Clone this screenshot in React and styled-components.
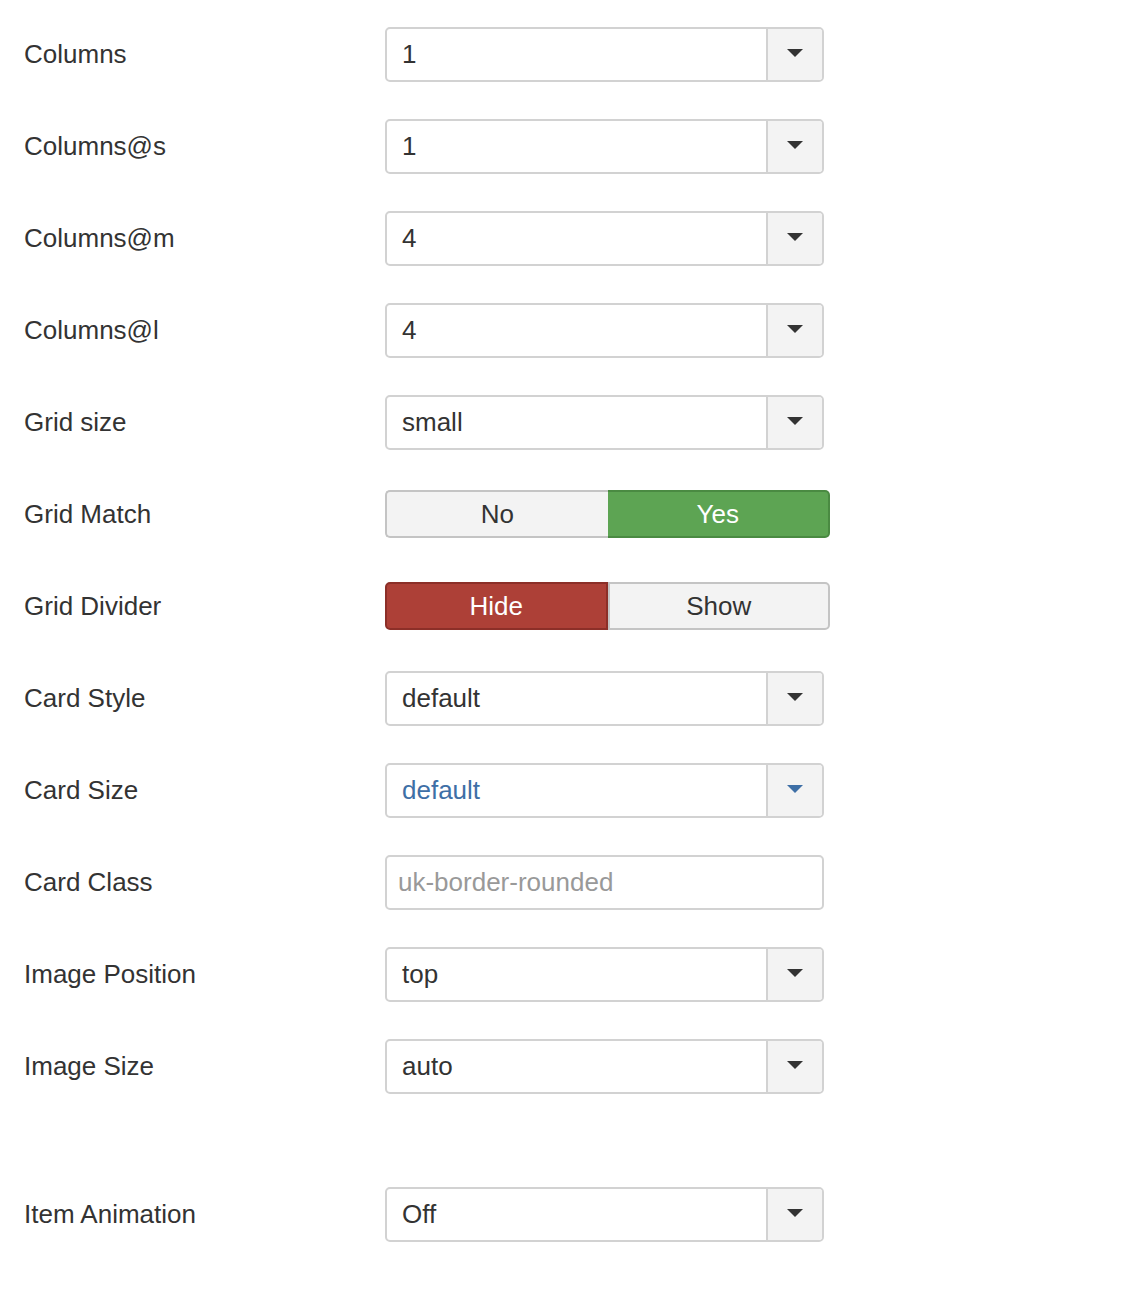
import React from 'react'
import styled, { createGlobalStyle } from 'styled-components'

const GlobalStyle = createGlobalStyle`
  body {
    margin: 0;
    background: #fff;
    font-family: 'Liberation Sans', Arial, sans-serif;
    color: #333;
  }
`

const fields = [
  { label: 'Columns', type: 'select', value: '1' },
  { label: 'Columns@s', type: 'select', value: '1' },
  { label: 'Columns@m', type: 'select', value: '4' },
  { label: 'Columns@l', type: 'select', value: '4' },
  { label: 'Grid size', type: 'select', value: 'small' },
  { label: 'Grid Match', type: 'toggle', options: ['No', 'Yes'], active: 1, tone: 'success' },
  { label: 'Grid Divider', type: 'toggle', options: ['Hide', 'Show'], active: 0, tone: 'danger' },
  { label: 'Card Style', type: 'select', value: 'default' },
  { label: 'Card Size', type: 'select', value: 'default', highlight: true },
  { label: 'Card Class', type: 'text', placeholder: 'uk-border-rounded' },
  { label: 'Image Position', type: 'select', value: 'top' },
  { label: 'Image Size', type: 'select', value: 'auto' },
  { label: 'Item Animation', type: 'select', value: 'Off', spaced: true },
]

const tones = {
  success: { bg: '#5da453', border: '#4a8a42' },
  danger: { bg: '#ad4037', border: '#8c2f28' },
}

function Field({ field }) {
  if (field.type === 'toggle') {
    return (
      <Toggle>
        {field.options.map((opt, i) => (
          <ToggleOption key={opt} $active={i === field.active} $tone={field.tone}>
            {opt}
          </ToggleOption>
        ))}
      </Toggle>
    )
  }

  if (field.type === 'text') {
    return <TextInput placeholder={field.placeholder} readOnly />
  }

  return (
    <Select>
      <SelectValue $highlight={field.highlight}>{field.value}</SelectValue>
      <Caret>
        <CaretArrow $highlight={field.highlight} />
      </Caret>
    </Select>
  )
}

export default function App() {
  return (
    <>
      <GlobalStyle />
      <Form>
        {fields.map((f) => (
          <Row key={f.label} $spaced={f.spaced}>
            <Label>{f.label}</Label>
            <Control>
              <Field field={f} />
            </Control>
          </Row>
        ))}
      </Form>
    </>
  )
}

const Form = styled.div`
  display: flex;
  flex-direction: column;
  padding: 27px 0 0 24px;
`

const Row = styled.div`
  display: flex;
  align-items: flex-start;
  height: 92px;
  margin-top: ${(p) => (p.$spaced ? '56px' : '0')};
`

const Label = styled.div`
  width: 361px;
  height: 55px;
  display: flex;
  align-items: center;
  font-size: 26px;
  color: #333;
`

const Control = styled.div`
  height: 55px;
  display: flex;
  align-items: center;
`

const Select = styled.div`
  box-sizing: border-box;
  width: 439px;
  height: 55px;
  display: flex;
  border: 2px solid #d2d2d2;
  border-radius: 5px;
  background: #fff;
  overflow: hidden;
`

const SelectValue = styled.div`
  flex: 1;
  display: flex;
  align-items: center;
  padding-left: 15px;
  font-size: 26px;
  color: ${(p) => (p.$highlight ? '#3e6fa6' : '#333')};
`

const Caret = styled.div`
  width: 54px;
  border-left: 2px solid #d2d2d2;
  background: #f3f3f3;
  display: flex;
  align-items: center;
  justify-content: center;
`

const CaretArrow = styled.span`
  width: 0;
  height: 0;
  border-left: 8px solid transparent;
  border-right: 8px solid transparent;
  border-top: 8px solid ${(p) => (p.$highlight ? '#3e6fa6' : '#333')};
  margin-bottom: 3px;
`

const TextInput = styled.input`
  box-sizing: border-box;
  width: 439px;
  height: 55px;
  border: 2px solid #d2d2d2;
  border-radius: 5px;
  padding: 0 11px;
  font-family: 'Liberation Sans', Arial, sans-serif;
  font-size: 26px;
  outline: none;

  &::placeholder {
    color: #999;
  }
`

const Toggle = styled.div`
  display: flex;
  width: 445px;
  height: 48px;
  margin-top: -1px;
`

const ToggleOption = styled.div`
  box-sizing: border-box;
  flex: 1;
  display: flex;
  align-items: center;
  justify-content: center;
  font-size: 26px;
  background: ${(p) => (p.$active ? tones[p.$tone].bg : '#f3f3f3')};
  color: ${(p) => (p.$active ? '#fff' : '#333')};
  border: 2px solid ${(p) => (p.$active ? tones[p.$tone].border : '#c4c4c4')};

  &:first-child {
    border-radius: 5px 0 0 5px;
    border-right-width: ${(p) => (p.$active ? '2px' : '0')};
  }

  &:last-child {
    border-radius: 0 5px 5px 0;
    border-left-width: ${(p) => (p.$active ? '0' : '2px')};
  }
`
